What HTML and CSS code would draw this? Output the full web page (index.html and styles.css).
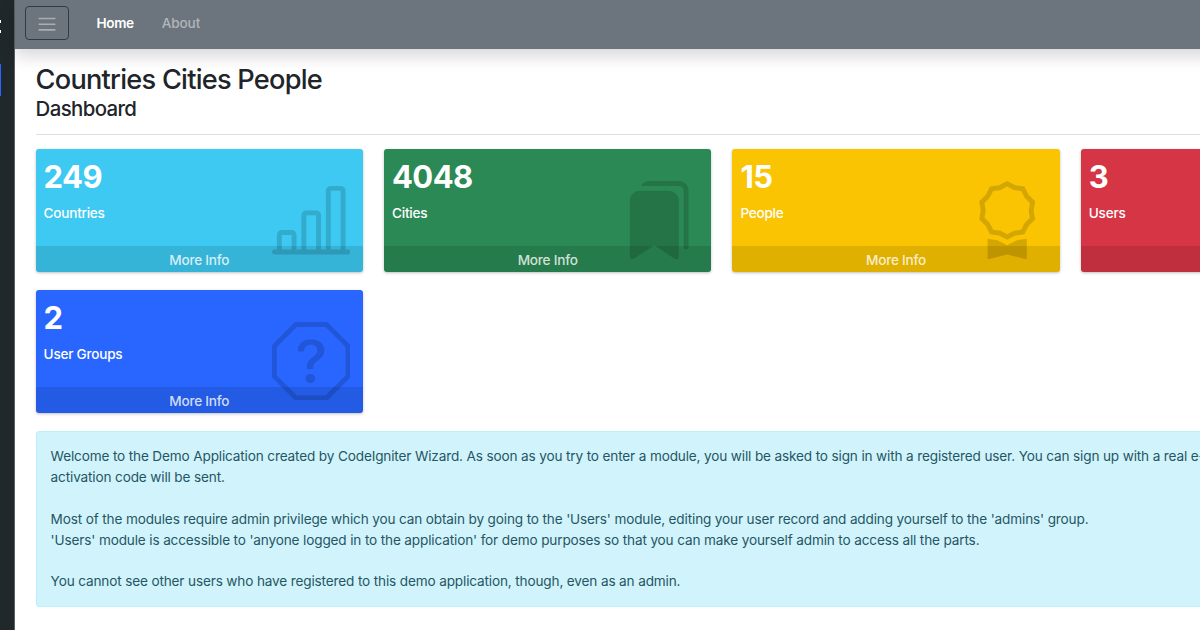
FILE: index.html
```html
<!DOCTYPE html>
<html lang="en">
<head>
<meta charset="utf-8">
<title>Countries Cities People</title>
<link rel="stylesheet" href="styles.css">
</head>
<body>
<div class="layout">
  <aside class="sidebar">
    <span class="brand-edge"></span>
    <span class="active-item"></span>
  </aside>
  <div class="page">
    <header class="navbar">
      <button class="toggler" aria-label="Toggle menu">
        <svg width="24" height="24" viewBox="0 0 24 24"><path d="M4.2 6.5h15.6M4.2 12.2h15.6M4.2 17.9h15.6" stroke="currentColor" stroke-width="1.6" stroke-linecap="round"/></svg>
      </button>
      <nav class="links">
        <a class="link active">Home</a>
        <a class="link">About</a>
      </nav>
    </header>
    <main class="content">
      <h1 class="title">Countries Cities People</h1>
      <h2 class="subtitle">Dashboard</h2>
      <hr class="rule">
      <section class="cards">
        <article class="card info">
          <strong class="count">249</strong>
          <p class="label">Countries</p>
          <svg class="icon" viewBox="0 0 16 16"><path d="M11 2a1 1 0 0 1 1-1h2a1 1 0 0 1 1 1v12h.5a.5.5 0 0 1 0 1H.5a.5.5 0 0 1 0-1H1v-3a1 1 0 0 1 1-1h2a1 1 0 0 1 1 1v3h1V7a1 1 0 0 1 1-1h2a1 1 0 0 1 1 1v7h1V2zm1 12h2V2h-2v12zm-3 0V7H7v7h2zm-5 0v-3H2v3h2z"/></svg>
          <a class="more">More Info</a>
        </article>
        <article class="card success">
          <strong class="count">4048</strong>
          <p class="label">Cities</p>
          <svg class="icon" viewBox="0 0 16 16"><path d="M2 4a2 2 0 0 1 2-2h6a2 2 0 0 1 2 2v11.5a.5.5 0 0 1-.777.416L7 13.101l-4.223 2.815A.5.5 0 0 1 2 15.5V4z"/><path d="M4.268 1H12a1 1 0 0 1 1 1v11.768l.223.148A.5.5 0 0 0 14 13.5V2a2 2 0 0 0-2-2H6a2 2 0 0 0-1.732 1z"/></svg>
          <a class="more">More Info</a>
        </article>
        <article class="card warning">
          <strong class="count">15</strong>
          <p class="label">People</p>
          <svg class="icon" viewBox="0 0 16 16"><path d="M9.669.864 8 0 6.331.864l-1.858.282-.842 1.68-1.337 1.32L2.6 6l-.306 1.854 1.337 1.32.842 1.68 1.858.282L8 12l1.669-.864 1.858-.282.842-1.68 1.337-1.32L13.4 6l.306-1.854-1.337-1.32-.842-1.68L9.669.864zm1.196 1.193.684 1.365 1.086 1.072L12.387 6l.248 1.506-1.086 1.072-.684 1.365-1.51.229L8 10.874l-1.355-.702-1.51-.229-.684-1.365-1.086-1.072L3.614 6l-.25-1.506 1.087-1.072.684-1.365 1.51-.229L8 1.126l1.356.702 1.509.229z"/><path d="M4 11.794V16l4-1 4 1v-4.206l-2.018.306L8 13.126 6.018 12.1 4 11.794z"/></svg>
          <a class="more">More Info</a>
        </article>
        <article class="card danger">
          <strong class="count">3</strong>
          <p class="label">Users</p>
          <a class="more">More Info</a>
        </article>
        <article class="card primary">
          <strong class="count">2</strong>
          <p class="label">User Groups</p>
          <svg class="icon" viewBox="0 0 16 16"><path d="M4.54.146A.5.5 0 0 1 4.893 0h6.214a.5.5 0 0 1 .353.146l4.394 4.394a.5.5 0 0 1 .146.353v6.214a.5.5 0 0 1-.146.353l-4.394 4.394a.5.5 0 0 1-.353.146H4.893a.5.5 0 0 1-.353-.146L.146 11.46A.5.5 0 0 1 0 11.107V4.893a.5.5 0 0 1 .146-.353L4.54.146zM5.1 1 1 5.1v5.8L5.1 15h5.8l4.1-4.1V5.1L10.9 1H5.1z"/><path d="M5.255 5.786a.237.237 0 0 0 .241.247h.825c.138 0 .248-.113.266-.25.09-.656.54-1.134 1.342-1.134.686 0 1.314.343 1.314 1.168 0 .635-.374.927-.965 1.371-.673.489-1.206 1.06-1.168 1.987l.003.217a.25.25 0 0 0 .25.246h.811a.25.25 0 0 0 .25-.25v-.105c0-.718.273-.927 1.01-1.486.609-.463 1.244-.977 1.244-2.056 0-1.511-1.276-2.241-2.673-2.241-1.267 0-2.655.59-2.75 2.286zm1.557 5.763c0 .533.425.927 1.01.927.609 0 1.028-.394 1.028-.927 0-.552-.42-.94-1.029-.94-.584 0-1.009.388-1.009.94z"/></svg>
          <a class="more">More Info</a>
        </article>
      </section>
      <section class="alert">
        <p class="line">Welcome to the Demo Application created by CodeIgniter Wizard. As soon as you try to enter a module, you will be asked to sign in with a registered user. You can sign up with a real e-</p>
        <p class="line">activation code will be sent.</p>
        <p class="line gap">Most of the modules require admin privilege which you can obtain by going to the 'Users' module, editing your user record and adding yourself to the 'admins' group.</p>
        <p class="line">'Users' module is accessible to 'anyone logged in to the application' for demo purposes so that you can make yourself admin to access all the parts.</p>
        <p class="line gap">You cannot see other users who have registered to this demo application, though, even as an admin.</p>
      </section>
    </main>
  </div>
</div>
</body>
</html>
```
FILE: styles.css
```css
* { box-sizing: border-box; }
body { margin: 0; height: 630px; overflow: hidden; background: #fff; color: #212529; font-family: Inter, "Liberation Sans", sans-serif; font-size: 13.6px; letter-spacing: -.15px; }
h1, h2, p { margin: 0; font-weight: 500; }
.layout { display: flex; height: 630px; overflow: hidden; }
.sidebar { flex: 0 0 15px; background: #20282b; border-right: 1px solid #5b6163; padding-top: 20px; }
.brand-edge { display: block; width: 1px; height: 13px; border: solid #fff; border-width: 3px 0; }
.active-item { display: block; width: 1px; height: 32px; margin-top: 31px; background: #2866ff; }
.page { flex: 0 0 1414px; }
.navbar { display: flex; align-items: flex-start; height: 49px; padding: 6px 10px; background: #6c757d; box-shadow: 0 8px 16px rgba(0,0,0,.15); }
.toggler { display: grid; place-items: center; width: 44px; height: 34px; padding: 1px 0 0; background: none; border: 1px solid #343a40; border-radius: 4px; color: #a9aeb3; }
.links { display: flex; gap: 28px; margin-left: 27.5px; padding-top: 7px; line-height: 20px; }
.link { font-weight: 500; color: #b1b6ba; }
.link.active { color: #fff; font-weight: 600; letter-spacing: -.35px; }
.content { padding: 14px 20.6px 0; }
.title { font-size: 27.2px; line-height: 34px; letter-spacing: -.76px; }
.subtitle { font-size: 20.4px; line-height: 24px; letter-spacing: -.62px; }
.rule { height: 1px; margin: 13px 0 14px; border: 0; background: #dedfe0; }
.cards { display: grid; grid-template-columns: repeat(4, 327.4px); grid-auto-rows: 123px; gap: 18px 21px; }
.card { position: relative; display: flex; flex-direction: column; padding-top: 9px; overflow: hidden; border-radius: 3px; color: #fff; box-shadow: 0 1px 3px rgba(0,0,0,.25); }
.info { background: #3dc9f1; }
.success { background: #2b8955; }
.warning { background: #fac402; }
.danger { background: #d63545; }
.primary { background: #2866ff; }
.count { padding-left: 8px; font-size: 31px; line-height: 38px; font-weight: 700; letter-spacing: -.6px; }
.label { padding: 7px 8px 0; line-height: 21px; font-weight: 550; letter-spacing: -.25px; }
.icon { position: absolute; top: 32px; right: 13px; width: 78.4px; height: 78.4px; fill: rgba(0,0,0,.15); }
.more { margin-top: auto; height: 26px; padding-top: 1px; background: rgba(0,0,0,.1); color: rgba(255,255,255,.8); line-height: 26px; text-align: center; font-weight: 500; letter-spacing: -.23px; }
.alert { height: 176px; margin-top: 18px; padding: 14px; background: #d1f3fc; border: 1px solid #bceffb; border-radius: 3px; color: #255663; }
.line { line-height: 20.9px; white-space: nowrap; font-weight: 400; }
.gap { margin-top: 20.9px; }
```
